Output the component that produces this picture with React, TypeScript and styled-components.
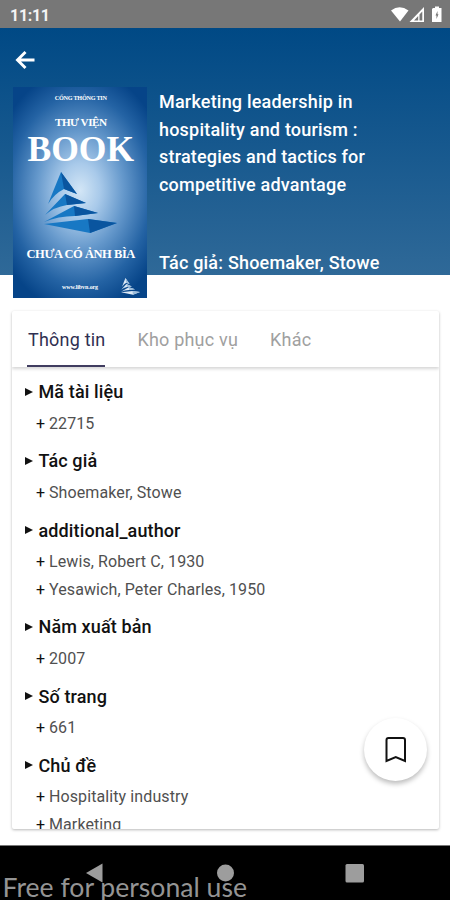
import React from "react";
import styled, { createGlobalStyle } from "styled-components";

const GlobalStyle = createGlobalStyle`
  * { box-sizing: border-box; }
  body { margin: 0; background: #fff; font-family: Roboto, "Noto Sans", sans-serif; }
`;

const Screen = styled.main`
  width: 450px;
  height: 900px;
  overflow: hidden;
  display: flex;
  flex-direction: column;
  background: #fff;
`;

const StatusBar = styled.header`
  height: 28px;
  flex: none;
  display: flex;
  align-items: center;
  justify-content: space-between;
  padding: 2px 7px 0 10px;
  background: #777;
  color: #f4f4f4;
  font-size: 16px;
  font-weight: 700;
`;

const Clock = styled.span`
  letter-spacing: -0.3px;
`;

const Hero = styled.section`
  height: 247px;
  flex: none;
  background: linear-gradient(#004985, #2f6998);
  color: #fff;
`;

const BackButton = styled.button`
  display: flex;
  align-items: center;
  width: 50px;
  height: 59px;
  padding: 5px 0 0 14px;
  border: 0;
  background: none;
`;

const Summary = styled.div`
  display: flex;
  gap: 12px;
  padding-left: 12.5px;
`;

const Cover = styled.div`
  width: 134.5px;
  height: 211px;
  flex: none;
  display: flex;
  flex-direction: column;
  align-items: center;
  padding: 5px 0 0 2px;
  background: radial-gradient(ellipse 90px 122px at 50% 49%, #d3e6f6 0%, #a9caea 22%, #6699cc 48%, #2463a4 78%, #064488 100%);
  font-family: "Liberation Serif", serif;
  font-weight: 700;
  white-space: nowrap;
`;

const CoverLine = styled.div<{ $size: number; $height: number; $track?: number }>`
  flex: none;
  font-size: ${(p) => p.$size}px;
  height: ${(p) => p.$height}px;
  line-height: ${(p) => p.$height}px;
  letter-spacing: ${(p) => p.$track ?? 0}px;
`;

const Emblem = styled.div`
  flex: none;
  height: 62px;
  margin-top: 14px;
`;

const CoverFoot = styled.div`
  width: 100%;
  display: flex;
  align-items: center;
  justify-content: flex-end;
  gap: 23px;
  padding: 3px 7px 0 0;
  font-size: 6px;
  letter-spacing: -0.1px;
`;

const Details = styled.div`
  height: 189px;
  display: flex;
  flex-direction: column;
  justify-content: space-between;
  padding-top: 1px;
  font-size: 18px;
  font-weight: 500;
  line-height: 27.5px;
  letter-spacing: 0.2px;
`;

const Title = styled.h1`
  width: 240px;
  margin: 0;
  font: inherit;
`;

const Author = styled.p`
  margin: 0;
  white-space: nowrap;
`;

const Card = styled.section`
  width: 427px;
  height: 518px;
  flex: none;
  margin: 36px 0 0 12px;
  overflow: hidden;
  border-radius: 2px;
  background: #fff;
  box-shadow: 0 1px 3px rgba(0, 0, 0, 0.28);
`;

const Tabs = styled.nav`
  height: 56px;
  display: flex;
  gap: 31px;
  padding-left: 15px;
  box-shadow: 0 2px 3px rgba(0, 0, 0, 0.16);
`;

const Tab = styled.button<{ $active?: boolean }>`
  height: 56px;
  padding: 3px 0 0 1px;
  border: 0;
  border-bottom: 2.5px solid ${(p) => (p.$active ? "#403d60" : "transparent")};
  background: none;
  color: ${(p) => (p.$active ? "#303052" : "#a0a0a0")};
  font-family: inherit;
  font-size: 18px;
  letter-spacing: 0.2px;
  white-space: nowrap;
`;

const Body = styled.div`
  padding: 11px 13px;
`;

const Group = styled.section`
  margin-bottom: 10.4px;
`;

const Heading = styled.h2`
  display: flex;
  align-items: center;
  gap: 5.5px;
  height: 27.3px;
  margin: 0 0 4.2px;
  color: #111;
  font-size: 18px;
  font-weight: 500;
  letter-spacing: 0.12px;
`;

const Value = styled.div`
  display: flex;
  align-items: center;
  gap: 4px;
  height: 27.4px;
  padding-left: 11px;
  color: #505050;
  font-size: 16px;
  letter-spacing: 0.1px;
`;

const Plus = styled.span`
  color: #111;
  width: 9px;
`;

const BookmarkButton = styled.button`
  position: absolute;
  left: 364px;
  top: 718px;
  width: 63px;
  height: 63px;
  display: flex;
  align-items: center;
  justify-content: center;
  padding: 0;
  border: 0;
  border-radius: 50%;
  background: #fff;
  box-shadow: 0 3px 5px rgba(0, 0, 0, 0.26);
`;

const SystemNav = styled.footer`
  height: 55px;
  flex: none;
  margin-top: auto;
  border-top: 1px solid #777;
  background: #000;
`;

const Watermark = styled.div`
  position: absolute;
  left: 2.5px;
  top: 871px;
  color: #949494;
  font-family: Lato, sans-serif;
  font-size: 26.6px;
  line-height: 32px;
  height: 29px;
  white-space: nowrap;
`;

type Info = { heading: string; values: string[] };

const groups: Info[] = [
  { heading: "Mã tài liệu", values: ["22715"] },
  { heading: "Tác giả", values: ["Shoemaker, Stowe"] },
  { heading: "additional_author", values: ["Lewis, Robert C, 1930", "Yesawich, Peter Charles, 1950"] },
  { heading: "Năm xuất bản", values: ["2007"] },
  { heading: "Số trang", values: ["661"] },
  { heading: "Chủ đề", values: ["Hospitality industry", "Marketing"] },
];

function StatusIcons() {
  return (
    <svg width="52" height="18" viewBox="0 0 52 18" fill="#fff">
      <path d="M0 4.500Q8.500-2 17.500 4.500L9 15.500Z" />
      <path fillRule="evenodd" d="M33 1V16H18.500ZM31.300 5.500L28.500 8.500V14.400H31.300ZM27.200 10L23 14.400H27.200Z" />
      <path fillRule="evenodd" d="M42 2H44V0.500H48V2H50.500V16H41V3ZM46.500 5L44.500 9.500H45.500V13L47.500 8.300H46.500Z" />
    </svg>
  );
}

function BackArrow() {
  return (
    <svg width="22" height="20" viewBox="0 0 22 20" fill="none" stroke="#fff" strokeWidth="2.900">
      <path d="M11.500 2L3.500 10L11.500 18M3.500 10H20.500" />
    </svg>
  );
}

function Pyramid({ width, height, light }: { width: number; height: number; light?: boolean }) {
  const main = light ? "#dce9f6" : "#1878c4";
  const shade = light ? "#9dbddb" : "#0a559f";
  return (
    <svg width={width} height={height} viewBox="0 0 73 62" preserveAspectRatio="none">
      <path fill={main} d="M17 0L4 32Q10 22 20 17L33 22Z" />
      <path fill={shade} d="M17 0L33 22L20 17Z" />
      <path fill={main} d="M21 22L1 43Q10 35 23 33L42 31Z" />
      <path fill={shade} d="M21 22L42 31L23 33Z" />
      <path fill={main} d="M30 34L0 50Q14 44 31 44L54 41Z" />
      <path fill={shade} d="M30 34L54 41L31 44Z" />
      <path fill={main} d="M44 47L0 52L46 61L73 51Z" />
      <path fill={shade} d="M44 47L46 61L73 51Z" />
    </svg>
  );
}

export default function App() {
  return (
    <>
      <GlobalStyle />
      <Screen>
        <StatusBar>
          <Clock>11:11</Clock>
          <StatusIcons />
        </StatusBar>
        <Hero>
          <BackButton aria-label="Back">
            <BackArrow />
          </BackButton>
          <Summary>
            <Cover>
              <CoverLine $size={6.2} $height={12} $track={-0.25}>CỔNG THÔNG TIN</CoverLine>
              <CoverLine $size={11.2} $height={37} $track={-0.5}>THƯ VIỆN</CoverLine>
              <CoverLine $size={35.5} $height={17}>BOOK</CoverLine>
              <Emblem>
                <Pyramid width={73} height={62} />
              </Emblem>
              <CoverLine $size={12.5} $height={41} $track={-0.45}>CHƯA CÓ ẢNH BÌA</CoverLine>
              <CoverFoot>
                <span>www.libvn.org</span>
                <Pyramid width={19} height={17} light />
              </CoverFoot>
            </Cover>
            <Details>
              <Title>
                Marketing leadership in<br />hospitality and tourism :<br />strategies and tactics for<br />competitive advantage
              </Title>
              <Author>Tác giả: Shoemaker, Stowe</Author>
            </Details>
          </Summary>
        </Hero>
        <Card>
          <Tabs>
            <Tab $active>Thông tin</Tab>
            <Tab>Kho phục vụ</Tab>
            <Tab>Khác</Tab>
          </Tabs>
          <Body>
            {groups.map((group) => (
              <Group key={group.heading}>
                <Heading>
                  <svg width="8" height="8" viewBox="0 0 8 8"><path d="M0 0L8 4L0 8Z" fill="#111" /></svg>
                  {group.heading}
                </Heading>
                {group.values.map((value) => (
                  <Value key={value}>
                    <Plus>+</Plus>
                    <span>{value}</span>
                  </Value>
                ))}
              </Group>
            ))}
          </Body>
        </Card>
        <BookmarkButton aria-label="Bookmark">
          <svg width="22" height="26" viewBox="0 0 22 26" fill="none" stroke="#111" strokeWidth="2">
            <path d="M1.500 3Q1.500 1 3.500 1H18Q20 1 20 3V24L10.750 20L1.500 24Z" />
          </svg>
        </BookmarkButton>
        <SystemNav>
          <svg width="450" height="54" viewBox="0 0 450 54" fill="#9d9d9d">
            <path d="M86 27L102.500 17.500V36.500Z" />
            <circle cx="225.500" cy="27" r="8.500" />
            <rect x="345.500" y="18" width="18.500" height="18.500" rx="1.500" />
          </svg>
        </SystemNav>
        <Watermark>Free for personal use</Watermark>
      </Screen>
    </>
  );
}
